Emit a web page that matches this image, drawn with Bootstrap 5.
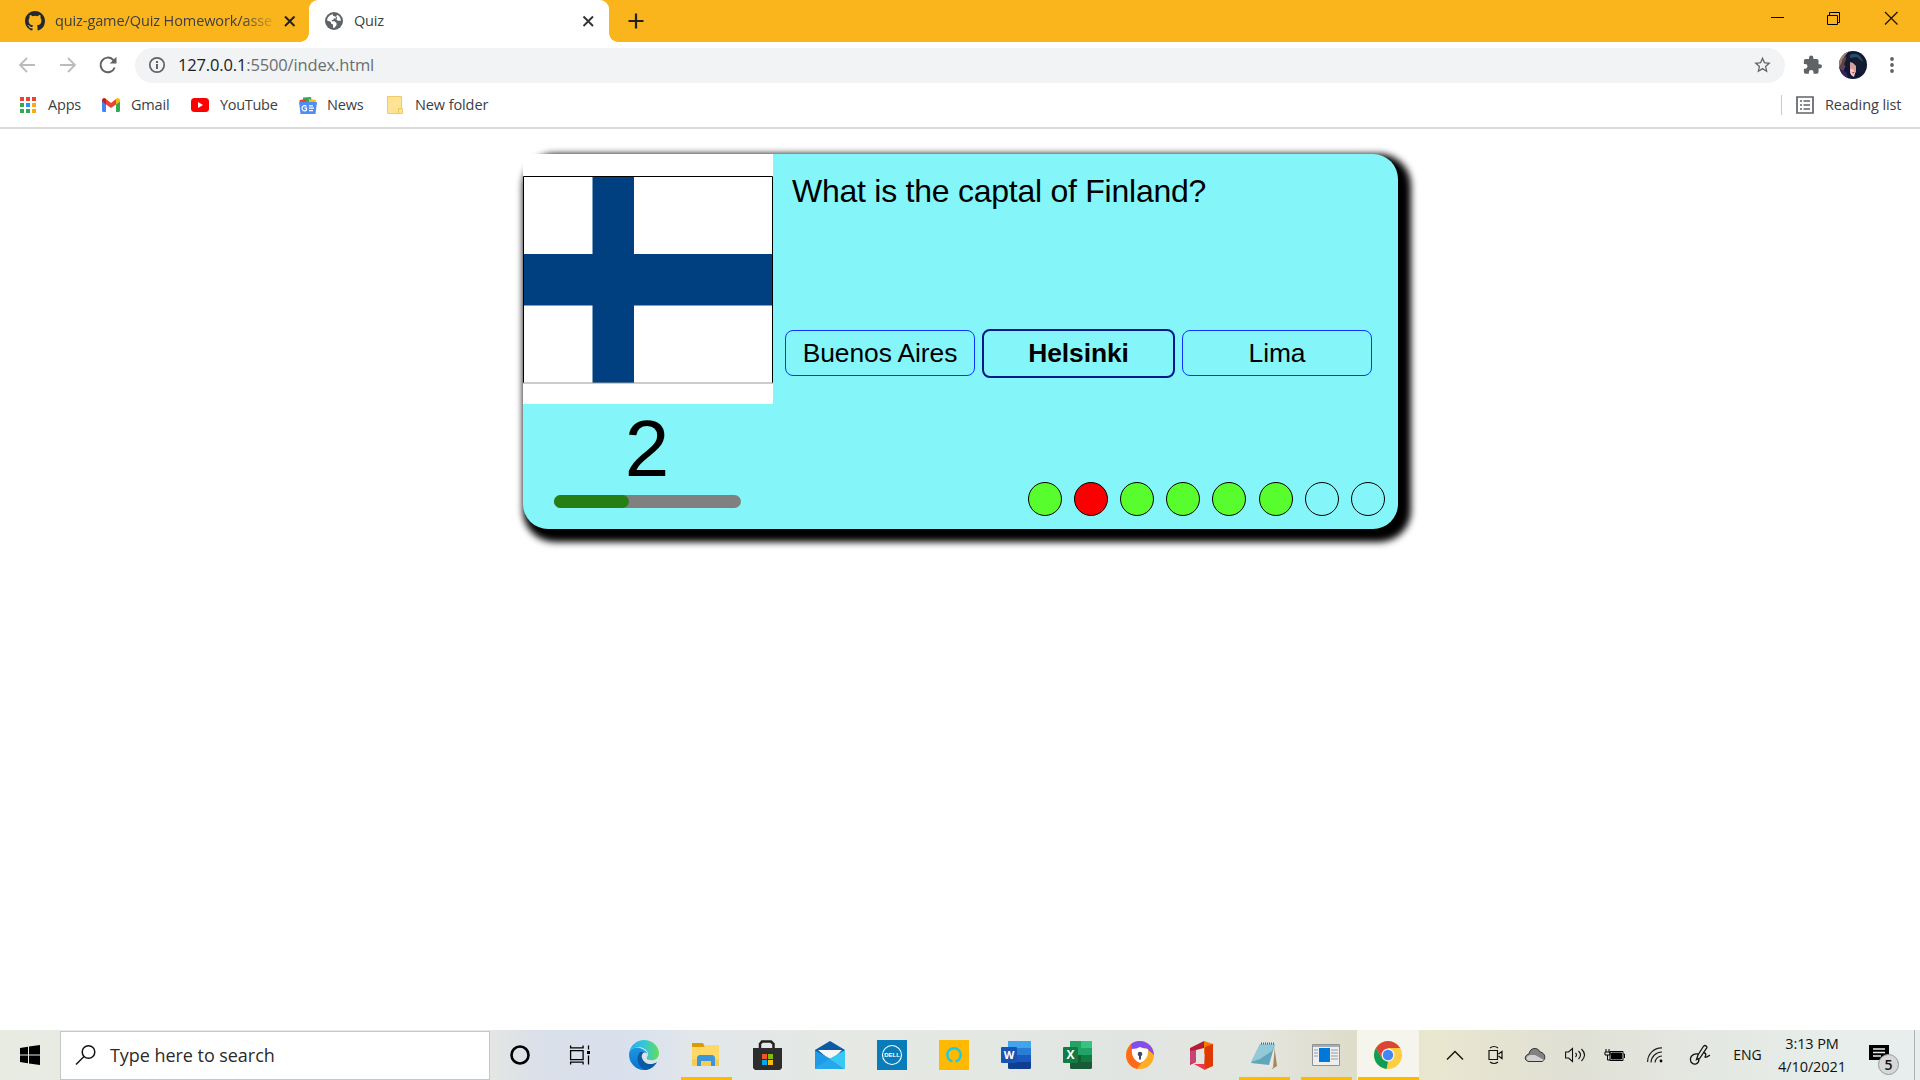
<!DOCTYPE html>
<html lang="en">
<head>
<meta charset="utf-8">
<meta name="viewport" content="width=device-width, initial-scale=1">
<title>Quiz</title>
<link href="https://cdn.jsdelivr.net/npm/bootstrap@5.3.0/dist/css/bootstrap.min.css" rel="stylesheet">
<style>
html,body{height:100%;overflow:hidden}
body{font-family:"Open Sans","Noto Sans",sans-serif;color:#3c4043;background:#fff;font-size:15px;line-height:1}
svg{display:block;flex:none;overflow:visible}
.tabstrip{height:42px;background:#fbb51c}
.tab-idle{width:309px;padding-left:25px}
.tab-idle .tab-title{width:218px;margin-left:10px;letter-spacing:-.1px;-webkit-mask-image:linear-gradient(90deg,#000 86%,rgba(0,0,0,.15));mask-image:linear-gradient(90deg,#000 86%,rgba(0,0,0,.15))}
.tab-title{font-size:14.5px;letter-spacing:-.2px;line-height:20px}
.tab-live{width:300px;background:#fff;border-radius:9px 9px 0 0;padding:0 15px 0 16px;position:relative}
.tab-live::before,.tab-live::after{content:"";position:absolute;bottom:0;width:9px;height:9px}
.tab-live::before{left:-9px;background:radial-gradient(circle at 0 0,transparent 8.5px,#fff 9px)}
.tab-live::after{right:-9px;background:radial-gradient(circle at 100% 0,transparent 8.5px,#fff 9px)}
.tab-name{margin-left:11px}
.new-tab{margin-left:19px;margin-top:13px}
.win-btn{width:57px;height:36px}
.toolrow{height:46px;padding:0 16px 0 15px}
.nav-ico{width:24px;margin-right:16px}
.nav-ico.reload{width:25px;margin-right:15px}
.omnibox{height:35px;width:1650px;border-radius:18px;background:#f1f3f4;padding:0 13px 0 13px}
.url-text{font-size:16.5px;letter-spacing:-.15px;margin-left:12px;color:#6a6e72;line-height:22px}
.url-text b{font-weight:400;color:#202124}
.bookmarks{height:41px;border-bottom:2px solid #dadce0;padding-bottom:5px;font-size:14.5px;letter-spacing:-.2px}
.avatar{width:28px;height:28px;margin-left:17px}
.page-area{height:901px;padding-top:25px;padding-left:523px}
.quiz-card{width:875px;height:375px;border-radius:25px;background:#84f6f9;box-shadow:6.5px 6.5px 7px 6.5px #000;font-family:"Liberation Sans",Arial,sans-serif;color:#000}
.left-col{width:250px}
.score{font-size:80px;line-height:90px;padding-right:2px}
.time-track{width:187px;height:13px;border-radius:6.5px;background:#808080;margin-top:1px;margin-right:1px}
.time-fill{height:13px;border-radius:6.5px;background:#257f13}
.question{font-size:32px;line-height:36px;padding:19px 0 0 19px;letter-spacing:-.25px}
.choices{padding-left:12px;gap:7px;height:50px;margin-top:119px}
.choice{width:190px;height:46px;border:1px solid #0a35ff;border-radius:8px;font-size:26.4px;letter-spacing:-.08px;line-height:1;padding:0;background:transparent;color:#000}
.choice.picked{width:193px;height:49px;border:2px solid #00188c;font-weight:700;margin-top:1px}
.dots{padding:0 13px 0 0;gap:12.2px;margin-top:104px}
.dot{width:34px;height:34px;border:1px solid #000}
.dot.ok{background:#58fd2e}.dot.bad{background:#fb0000}
.taskbar{height:50px;color:#111;background:linear-gradient(90deg,#e8ebe2 0,#e6e8e2 480px,#dbe0e9 535px,#d9e0ed 620px,#e2e7ea 700px,#e6e9e3 860px,#e1e5e2 1130px,#e4e5df 1260px,#dedcca 1350px,#e9e7cf 1430px,#e0e0d5 1570px,#e4e7e1 1690px,#e7eeeb 1850px,#e7eeee 1920px)}
.start{width:60px}
.search{width:430px;height:49px;background:#fff;border:1px solid #c5c7c9;padding-left:15px;font-size:18px;letter-spacing:-.05px;color:#2b2b2b}
.sys{width:60px}
.app{width:62px;height:50px;position:relative}
.app.open::after{content:"";position:absolute;bottom:0;left:6px;right:5px;height:3px;background:#ffb900}
.app.live{background:#f5f5ed}.app.live::after{left:1px;right:0}
.tray{width:40px}
.clock{width:82px;font-size:14.5px;line-height:23px;letter-spacing:-.1px}
.note{width:52px;position:relative}
.note-count{position:absolute;left:25px;top:24px;width:21px;height:21px;border:1px solid #969a99;border-radius:50%;background:#d5d8d7;font-size:14px;line-height:19px;text-align:center;font-weight:600}
.peek{width:5px;height:50px;border-left:1px solid #aeb4b3;margin-left:9px}
</style>
<script src="https://cdn.jsdelivr.net/npm/bootstrap@5.3.0/dist/js/bootstrap.bundle.min.js"></script>
</head>
<body class="d-flex flex-column">
<header>
 <div class="tabstrip d-flex">
  <div class="tab-idle d-flex align-items-center">
   <svg width="20" height="20" viewBox="0 0 16 16" fill="#24292e"><path d="M8 0C3.58 0 0 3.58 0 8c0 3.54 2.29 6.53 5.47 7.59.4.07.55-.17.55-.38v-1.49c-2.01.37-2.53-.49-2.69-.94-.09-.23-.48-.94-.82-1.13-.28-.15-.68-.52-.01-.53.63-.01 1.08.58 1.23.82.72 1.21 1.87.87 2.33.66.07-.52.28-.87.51-1.07-1.78-.2-3.64-.89-3.64-3.95 0-.87.31-1.59.82-2.15-.08-.2-.36-1.02.08-2.12 0 0 .67-.21 2.2.82a7.5 7.5 0 014 0c1.53-1.04 2.2-.82 2.2-.82.44 1.1.16 1.92.08 2.12.51.56.82 1.27.82 2.15 0 3.07-1.87 3.75-3.65 3.95.29.25.54.73.54 1.48v2.2c0 .21.15.46.55.38A8 8 0 0016 8c0-4.42-3.58-8-8-8z"/></svg>
   <span class="tab-title text-nowrap">quiz-game/Quiz Homework/asse</span>
   <svg class="ms-2" width="18" height="20" viewBox="0 0 18 20" stroke="#222" stroke-width="2"><path d="M4 5.500l9.500 9.500m0-9.500L4 15"/></svg>
  </div>
  <div class="tab-live d-flex align-items-center">
   <svg width="18" height="18" viewBox="0 0 18 18"><circle cx="9" cy="9" r="9" fill="#5f6368"/><path d="M8 2.200C4.700 2.700 2.200 5.300 2.100 8.600L6 10v1.500l2 1v3.300h1.500l2-2.500V11L9.500 9.300H6.800V8H8.500V6.500h2.300V4.700L8 3.800zM12 2.800l-.8 2 1 1-.8 2 1.800 1h2.700C15.800 6 14.400 3.800 12 2.800z" fill="#fff"/></svg>
   <span class="tab-title tab-name flex-grow-1">Quiz</span>
   <svg width="12" height="12" viewBox="0 0 12 12" stroke="#303236" stroke-width="1.900"><path d="M1.500 1.500l9.500 9.500m0-9.500L1.500 11"/></svg>
  </div>
  <svg class="new-tab" width="16" height="16" stroke="#222" stroke-width="2.200"><path d="M8 .5v15M.5 8h15"/></svg>
  <div class="d-flex ms-auto">
   <div class="win-btn d-flex justify-content-center align-items-center"><svg width="13" height="2"><path d="M0 0h13v1H0z"/></svg></div>
   <div class="win-btn d-flex justify-content-center align-items-center"><svg width="13" height="13" fill="none" stroke="#000"><path d="M-.5 3.500h10v9h-10zM1.500 3.500v-3h10v10h-2"/></svg></div>
   <div class="win-btn d-flex justify-content-center align-items-center"><svg width="13" height="13" stroke="#111" stroke-width="1.200"><path d="M0 0l12.500 12.500M12.500 0L0 12.500"/></svg></div>
  </div>
 </div>
 <div class="toolrow d-flex align-items-center">
  <div class="nav-ico d-flex justify-content-center"><svg width="16" height="16" fill="none" stroke="#babcbe" stroke-width="1.800"><path d="M16 8H1M8 1L1 8l7 7"/></svg></div>
  <div class="nav-ico d-flex justify-content-center"><svg width="16" height="16" fill="none" stroke="#babcbe" stroke-width="1.800"><path d="M1 8h15M9 1l7 7-7 7"/></svg></div>
  <div class="nav-ico reload d-flex justify-content-center"><svg width="18" height="18" viewBox="0 0 18 18" fill="none" stroke="#5f6368" stroke-width="2"><path d="M15.700 11.500A7.300 7.300 0 1114 3.700l1.500 1.600"/><path d="M17.500.8v6.700h-6.700z" fill="#5f6368" stroke="none"/></svg></div>
  <div class="omnibox d-flex align-items-center">
   <svg width="18" height="18" fill="none" stroke="#5f6368" stroke-width="1.700"><circle cx="9" cy="9" r="7.200"/><path stroke-width="2" d="M9 8v5M9 5v2"/></svg>
   <span class="url-text"><b>127.0.0.1</b>:5500/index.html</span>
   <svg class="ms-auto" width="19" height="18" viewBox="0 0 24 24" fill="#5f6368"><path d="M23 9l-7.700-.7L12 1 8.800 8.300 1 9l6 5.200L5.200 22 12 17.900l6.800 4.100-1.800-7.800zm-11 6.800l-4.300 2.700 1.100-5-3.700-3.300 4.900-.4L12 5.200l2 4.600 4.900.4-3.700 3.300 1.100 5z"/></svg>
  </div>
  <svg class="ms-auto" width="19" height="20" viewBox="1 1 22 22" fill="#5f6368"><path d="M20.500 11H19V7a2 2 0 00-2-2h-4V3.500a2.500 2.500 0 00-5 0V5H4a2 2 0 00-2 2v3.800h1.500a2.700 2.700 0 010 5.400H2V20a2 2 0 002 2h3.800v-1.500a2.700 2.700 0 015.400 0V22H17a2 2 0 002-2v-4h1.500a2.500 2.500 0 000-5z"/></svg>
  <svg class="avatar" viewBox="0 0 28 28"><defs><clipPath id="round"><circle cx="14" cy="14" r="14"/></clipPath></defs><g clip-path="url(#round)"><path fill="#10183a" d="M0 0h28v28H0z"/><path fill="#a6816e" d="M0 0h10L6 5 3 10l1 4-4 3z"/><path fill="#5d4450" d="M4 8l3-3 1 7-4 9-4-4z"/><path fill="#141c31" d="M9 4C15-2 27 3 26 14l-1 9-6-2-3-9-4-3-2 3-2 6-3-5z"/><path fill="#235064" d="M11 4c6-3 11 0 13 7l-6-5-7 1z"/><path fill="#d6a09a" d="M11 11l3 1 3 3 0 6-3 4-3-3z"/><path fill="#f7c7bf" d="M11 18l3 0 2 4-1 4-3-2z"/><path fill="#9b2944" d="M13 21l3 .5-2 1z"/><path fill="#38225a" d="M1 18l6 3 3 7H0z"/></g></svg>
  <svg style="margin-left:23px" width="4" height="16" fill="#5f6368"><circle cx="2" cy="2" r="1.900"/><circle cx="2" cy="8" r="1.900"/><circle cx="2" cy="14" r="1.900"/></svg>
  <i style="width:10px"></i>
 </div>
 <div class="bookmarks d-flex align-items-center">
  <svg style="margin-left:20px" width="17" height="17"><g fill="#ea4335"><path d="M0 0h4v4H0zM6 0h4v4H6zM12 0h4v4h-4z"/></g><path fill="#34a853" d="M0 6h4v4H0zM0 12h4v4H0zM6 12h4v4H6z"/><path fill="#2196f3" d="M6 6h4v4H6z"/><path fill="#fbab12" d="M12 6h4v4h-4zM12 12h4v4h-4z"/></svg>
  <span style="width:54px;margin-left:11px">Apps</span>
  <svg width="18" height="14" viewBox="0 0 18 14"><path fill="#4285f4" d="M0 3l4 3v8H1.500A1.500 1.500 0 010 12.500z"/><path fill="#34a853" d="M14 6l4-3v9.500a1.500 1.500 0 01-1.500 1.500H14z"/><path fill="#ea4335" d="M4 1l5 4 5-4v5.500L9 10 4 6.500z"/><path fill="#c5221f" d="M0 2.300C0 .2 2.300-.8 4 .8v5.700L0 3.600z"/><path fill="#fbbc04" d="M18 2.300C18 .2 15.700-.8 14 .8v5.700l4-2.900z"/></svg>
  <span style="width:60px;margin-left:11px">Gmail</span>
  <svg width="18" height="14"><rect width="18" height="14" rx="3.500" fill="#f00"/><path d="M7 4l5 3-5 3z" fill="#fff"/></svg>
  <span style="width:68px;margin-left:11px;letter-spacing:-.3px">YouTube</span>
  <svg style="margin-left:11px" width="18" height="17" viewBox="0 0 18 17"><path fill="#34a853" d="M4 .5l8-.5 1 5H4z"/><path fill="#ea4335" d="M.5 3L7 2l1 6-7 0z"/><path fill="#fbbc04" d="M10 2l7 1-1 5h-6z"/><path fill="#4f8df5" d="M0 5h18l-1.500 12h-15z"/><path d="M7.500 9.500A2.600 2.600 0 107.500 13v-1.800H5.500M10 8.800h4M10 11.200h5M10 13.600h4" fill="none" stroke="#fff" stroke-width="1.200"/></svg>
  <span style="width:48px;margin-left:10px">News</span>
  <svg style="margin-left:12px" width="16" height="18"><path d="M.5.5h14V12l1 1v4.500H.5z" fill="#ffe394" stroke="#eecb68"/><path d="M11.500 17v-4.500h3" fill="none" stroke="#e8c55e"/></svg>
  <span style="margin-left:12px;letter-spacing:-.1px">New folder</span>
  <div class="d-flex align-items-center ms-auto"><i class="border-start" style="height:20px;width:15px;border-color:#c8cacd!important"></i><svg width="18" height="18" fill="none" stroke="#5f6368" stroke-width="1.700"><path d="M1 1h16v16H1z"/><path d="M4 5h2m1.500 0H14M4 9h2m1.500 0H14M4 13h2m1.500 0H14"/></svg><span style="width:95px;margin-left:11px;letter-spacing:-.1px">Reading list</span></div>
 </div>
</header>
<main class="page-area">
 <section class="quiz-card d-flex">
  <div class="left-col d-flex flex-column align-items-center">
   <svg width="250" height="250"><path fill="#fff" d="M0 0h250v250H0z"/><path fill="#004080" d="M69.500 22h41.500v78h139v51.500H111V229H69.500v-77.500H0V100h69.500z"/><path fill="none" stroke="#000" d="M.5 229V22.500h249V229"/><path stroke="#999" d="M0 229h250"/></svg>
   <div class="score">2</div>
   <div class="time-track"><div class="time-fill" style="width:40%"></div></div>
  </div>
  <div class="flex-grow-1">
   <div class="question">What is the captal of Finland?</div>
   <div class="choices d-flex align-items-center">
    <button class="choice">Buenos Aires</button><button class="choice picked">Helsinki</button><button class="choice">Lima</button>
   </div>
   <div class="dots d-flex justify-content-end"><i class="dot ok rounded-circle"></i><i class="dot bad rounded-circle"></i><i class="dot ok rounded-circle"></i><i class="dot ok rounded-circle"></i><i class="dot ok rounded-circle"></i><i class="dot ok rounded-circle"></i><i class="dot rounded-circle"></i><i class="dot rounded-circle"></i></div>
  </div>
 </section>
</main>
<footer class="taskbar d-flex align-items-center">
 <div class="start d-flex justify-content-center"><svg width="20" height="20"><path d="M0 3l8-1.200V9.500H0zM9 1.600L20 0v9.500H9zM0 10.500h8v7.700L0 17zM9 10.500h11V20L9 18.400z"/></svg></div>
 <div class="search d-flex align-items-center"><svg width="20" height="20" fill="none" stroke="#111" stroke-width="1.500"><circle cx="12.500" cy="7" r="6.300"/><path d="M8 11.500L0 19.500"/></svg><span style="margin-left:14px">Type here to search</span></div>
 <div class="sys d-flex justify-content-center"><svg width="20" height="20" fill="none" stroke="#000" stroke-width="2.600"><circle cx="10" cy="10" r="8.500"/></svg></div>
 <div class="sys d-flex justify-content-center" style="margin-right:3px"><svg width="20" height="20" fill="none" stroke="#000" stroke-width="1.300"><path d="M.6 5.600h12.500v9H.6zM.6.500v2.300h12.500V.5M.6 19.500v-2.300h12.500v2.300M18.500.5v4M18.500 10.500v9"/><path d="M17 6h3v3h-3z" fill="#000" stroke="none"/></svg></div>
 <!-- Edge -->
 <div class="app d-flex justify-content-center align-items-center"><svg width="30" height="30" viewBox="0 0 30 30"><defs><linearGradient id="ea"><stop stop-color="#29a9f0"/><stop offset=".5" stop-color="#33c7d8"/><stop offset="1" stop-color="#65dd59"/></linearGradient><linearGradient id="eb" x2="0" y2="1"><stop stop-color="#1c96df"/><stop offset="1" stop-color="#0876cf"/></linearGradient></defs><path fill="url(#eb)" d="M0 14C1 8 8 6 13 9c3 1 5 3 5 5-2-3-7-1-7 4 0 7 8 10 16 5-5 9-17 9-23 2-3-3-4-7-4-11z"/><path fill="#0c59a4" d="M11 12c-5 6-2 16 6 18 5-1 9-4 11-8-6 4-13 2-15-4-1-2 0-4 2-6z"/><path fill="url(#ea)" d="M0 14C1 5 8 0 15 0c9 0 15 7 15 13 0 6-5 8-9 7-3 0-4-1-3-3 3-4-1-9-8-10-5 0-9 3-10 7z"/></svg></div>
 <!-- Explorer -->
 <div class="app open d-flex justify-content-center align-items-center"><svg width="29" height="24" viewBox="0 0 29 24"><path fill="#dc9b05" d="M0 0h11l2 4H0z"/><path fill="#ffd968" d="M0 4h12l2-2h13v21H0z"/><path fill="#f7cc54" d="M0 16h27v7H0z"/><path fill="#3b96dc" d="M5 14l2-2h14l2 2v9h-4v-5H9v5H5z"/></svg></div>
 <!-- Store -->
 <div class="app d-flex justify-content-center align-items-center"><svg width="30" height="30" viewBox="0 0 30 30"><path d="M7 9V4l2-2.500h9L20.500 4v5" fill="none" stroke="#222" stroke-width="2.500"/><path fill="#2d2d2d" d="M0 8h29v20l-2 2H2l-2-2z"/><path fill="#f35325" d="M9 14h5v5H9z"/><path fill="#81bc06" d="M15 14h5v5h-5z"/><path fill="#05a6f0" d="M9 20h5v5H9z"/><path fill="#ffba08" d="M15 20h5v5h-5z"/></svg></div>
 <!-- Mail -->
 <div class="app d-flex justify-content-center align-items-center"><svg width="30" height="28" viewBox="0 0 30 28"><path fill="#0c59a4" d="M0 9L15 0l15 9v7H0z"/><path fill="#f7f7f7" d="M3 9h24l-11 11z"/><path fill="#38c8f4" d="M30 9L15 17.500 30 28z"/><path fill="#25a8ec" d="M0 28V14l15 3.500L30 28z"/><path fill="#1f9be6" d="M0 9.500L15 17.500 0 27z"/></svg></div>
 <!-- Dell -->
 <div class="app d-flex justify-content-center align-items-center"><svg width="30" height="30" viewBox="0 0 30 30"><path fill="#087dba" d="M0 0h30v30H0z"/><circle cx="15" cy="15" r="9.500" fill="none" stroke="#fff" stroke-width="1.100"/><text x="15" y="17.300" text-anchor="middle" font-size="6" font-weight="700" fill="#fff" font-family="Liberation Sans,sans-serif">DELL</text></svg></div>
 <!-- Alexa -->
 <div class="app d-flex justify-content-center align-items-center"><svg width="30" height="30" viewBox="0 0 30 30"><path fill="#ffb900" d="M0 0h30v30H0z"/><path d="M13.500 21.500A6.700 6.700 0 1116.500 21.500" fill="none" stroke="#19c9e8" stroke-width="2.300"/></svg></div>
 <!-- Word -->
 <div class="app d-flex justify-content-center align-items-center"><svg width="30" height="28" viewBox="0 0 30 28"><rect x="7" width="23" height="28" rx="1.500" fill="#103f91"/><path fill="#41a5ee" d="M7 0h22l1 1v6H7z"/><path fill="#2b7cd3" d="M7 7h23v7H7z"/><path fill="#185abd" d="M7 14h23v7H7z"/><rect y="6" width="16" height="16" rx="1" fill="#1855b3"/><text x="8" y="18" text-anchor="middle" font-size="11" font-weight="700" fill="#fff">W</text></svg></div>
 <!-- Excel -->
 <div class="app d-flex justify-content-center align-items-center"><svg width="30" height="28" viewBox="0 0 30 28"><rect x="7" width="22" height="28" rx="1.500" fill="#185c37"/><path fill="#21a366" d="M7 0h11v14H7z"/><path fill="#33c481" d="M18 0h10l1 1v6H18z"/><path fill="#21a366" d="M18 7h11v7H18z"/><path fill="#107c41" d="M18 14h11v7H18z"/><rect y="6" width="15" height="16" rx="1" fill="#107c41"/><text x="7.500" y="18" text-anchor="middle" font-size="12" font-weight="700" fill="#fff">X</text></svg></div>
 <!-- Secure browser -->
 <div class="app d-flex justify-content-center align-items-center"><svg width="28" height="28" viewBox="0 0 28 28"><circle cx="14" cy="14" r="14" fill="#ffad25"/><path fill="#ff6b18" d="M14 14L5 3C-3 11-1 25 11 28l5-7z"/><path fill="#854df0" d="M5 3c7-6 22-3 23 11L20 7 6 9z"/><path fill="#fff" d="M6 8q5 0 8-2 4 2 8 2c1 7-3 12-8 14C9 20 5 15 6 8z"/><circle cx="14" cy="13" r="2.300" fill="#414866"/><path stroke="#414866" stroke-width="2" d="M14 13v5.500"/></svg></div>
 <!-- Office -->
 <div class="app d-flex justify-content-center align-items-center"><svg width="24" height="29" viewBox="0 0 24 29"><path fill="#b51d35" d="M0 7L14 0v7L6 9v12l-6 3z"/><path fill="#c84477" d="M0 10l6-1v12l-6 2z"/><path fill="#f17c00" d="M14 0l9 3v10h-9z"/><path fill="#df3800" d="M15 6l8-3v22l-9 4z"/><path fill="#ed354b" d="M4 23h11v6z"/></svg></div>
 <!-- Notepad -->
 <div class="app open d-flex justify-content-center align-items-center"><svg width="28" height="28" viewBox="0 0 28 28"><path fill="#a4875b" d="M24 3l3 22-5 3z"/><path fill="#e9e7df" d="M9 3h16l-2 24L1 22z"/><path fill="#5fa6bd" d="M10 3h15l-6 21-18-2z"/><path fill="#93c9d6" d="M10 3h15l-3 7-12 8-9 3z"/><path d="M11 2.500h14" stroke="#52636b" stroke-width="2" stroke-dasharray="1 1"/></svg></div>
 <!-- Application window -->
 <div class="app open d-flex justify-content-center align-items-center"><svg width="28" height="22"><path fill="#eee" stroke="#8d9397" d="M.5.500h27v21H.500z"/><path fill="#a5adb3" d="M1 1h26v2H1z"/><path fill="#0078d7" d="M7 4h11v14H7z"/><path d="M2 6h4M2 9h4M2 12h4M19 6h7M19 9h7M19 12h7M19 15h7" stroke="#969ca0"/></svg></div>
 <!-- Chrome -->
 <div class="app open live d-flex justify-content-center align-items-center"><svg width="28" height="28" viewBox="0 0 28 28"><circle cx="14" cy="14" r="14" fill="#ffcd42"/><path fill="#db4437" d="M1.900 7A14 14 0 0126.100 7H14v7L8 17.500z"/><path fill="#0f9d58" d="M1.900 7L8 17.500l6 3.300L12.500 28A14 14 0 011.900 7z"/><circle cx="14" cy="14" r="6.500" fill="#f4f4f4"/><circle cx="14" cy="14" r="5.200" fill="#4285f4"/></svg></div>
 <div class="tray d-flex justify-content-center" style="margin-left:16px"><svg width="16" height="9" fill="none" stroke="#111" stroke-width="1.400"><path d="M0 8.500l8-8 8 8"/></svg></div>
 <div class="tray d-flex justify-content-center"><svg width="14" height="18" fill="none" stroke="#111" stroke-width="1.200"><path d="M1 4.500h8.500v9H1zM10.500 8l3.500-2.500v7L10.500 10M2 2q4-3 8 0M2 16q4 3 8 0"/></svg></div>
 <div class="tray d-flex justify-content-center"><svg width="20" height="14"><path d="M4 13.500C-1 13-1 7 4 6 5-1 13-1 15 4c6 1 6 8 2 9.500z" fill="#838383" stroke="#333"/><path d="M4 13c-4-1-3-5 1-6l5 0 9 5-2 1z" fill="#d2d2d2"/></svg></div>
 <div class="tray d-flex justify-content-center"><svg width="21" height="16" fill="none" stroke="#111" stroke-width="1.100"><path d="M.6 5h3L7.500 1.500v13L3.600 11h-3zM10.500 6q2 2 0 4M13.500 4q4 4 0 8M16.500 2q6 6 0 12"/></svg></div>
 <div class="tray d-flex justify-content-center"><svg width="20" height="13" fill="none" stroke="#000"><path d="M5 2.500h13v9H5zM18.500 5h1v4M1 0v3M4 0v3M0 3h5v3H0zM2.500 6v5h3"/><path d="M6.500 4h10v6h-10z" fill="#000"/></svg></div>
 <div class="tray d-flex justify-content-center"><svg width="16" height="16" fill="none" stroke="#222" stroke-width="1.200"><path d="M.6 15A14 14 0 0115 .8M4 15.500A11 11 0 0115 5M8 15.500A7 7 0 0115 9"/><circle cx="14" cy="14" r="1.400" fill="#000" stroke="none"/></svg></div>
 <div class="d-flex justify-content-center" style="width:50px"><svg width="20" height="20" fill="none" stroke="#111" stroke-width="1.300"><path d="M6.500 14.500L8 10l5-8q2-3 4 0 0 1-1 2l-6 9-3.500 1.500zM8 9C3 8-1 12 1 17c3 4 8 2 8-3M14 8q3 0 1 4c1 1 2 0 5-2"/></svg></div>
 <div class="text-center" style="width:45px;font-size:14px">ENG</div>
 <div class="clock text-center" style="margin-left:1px">3:13 PM<br>4/10/2021</div>
 <div class="note d-flex justify-content-center align-items-center" style="height:50px"><svg width="20" height="20" style="margin-bottom:2px"><path d="M0 1h20v15h-5v4l-4-4H0z"/><path d="M4 5h12M4 8.500h12M4 12h8" stroke="#e7eeeb" stroke-width="1.300"/></svg><span class="note-count">5</span></div>
 <div class="peek"></div>
</footer>
</body>
</html>
